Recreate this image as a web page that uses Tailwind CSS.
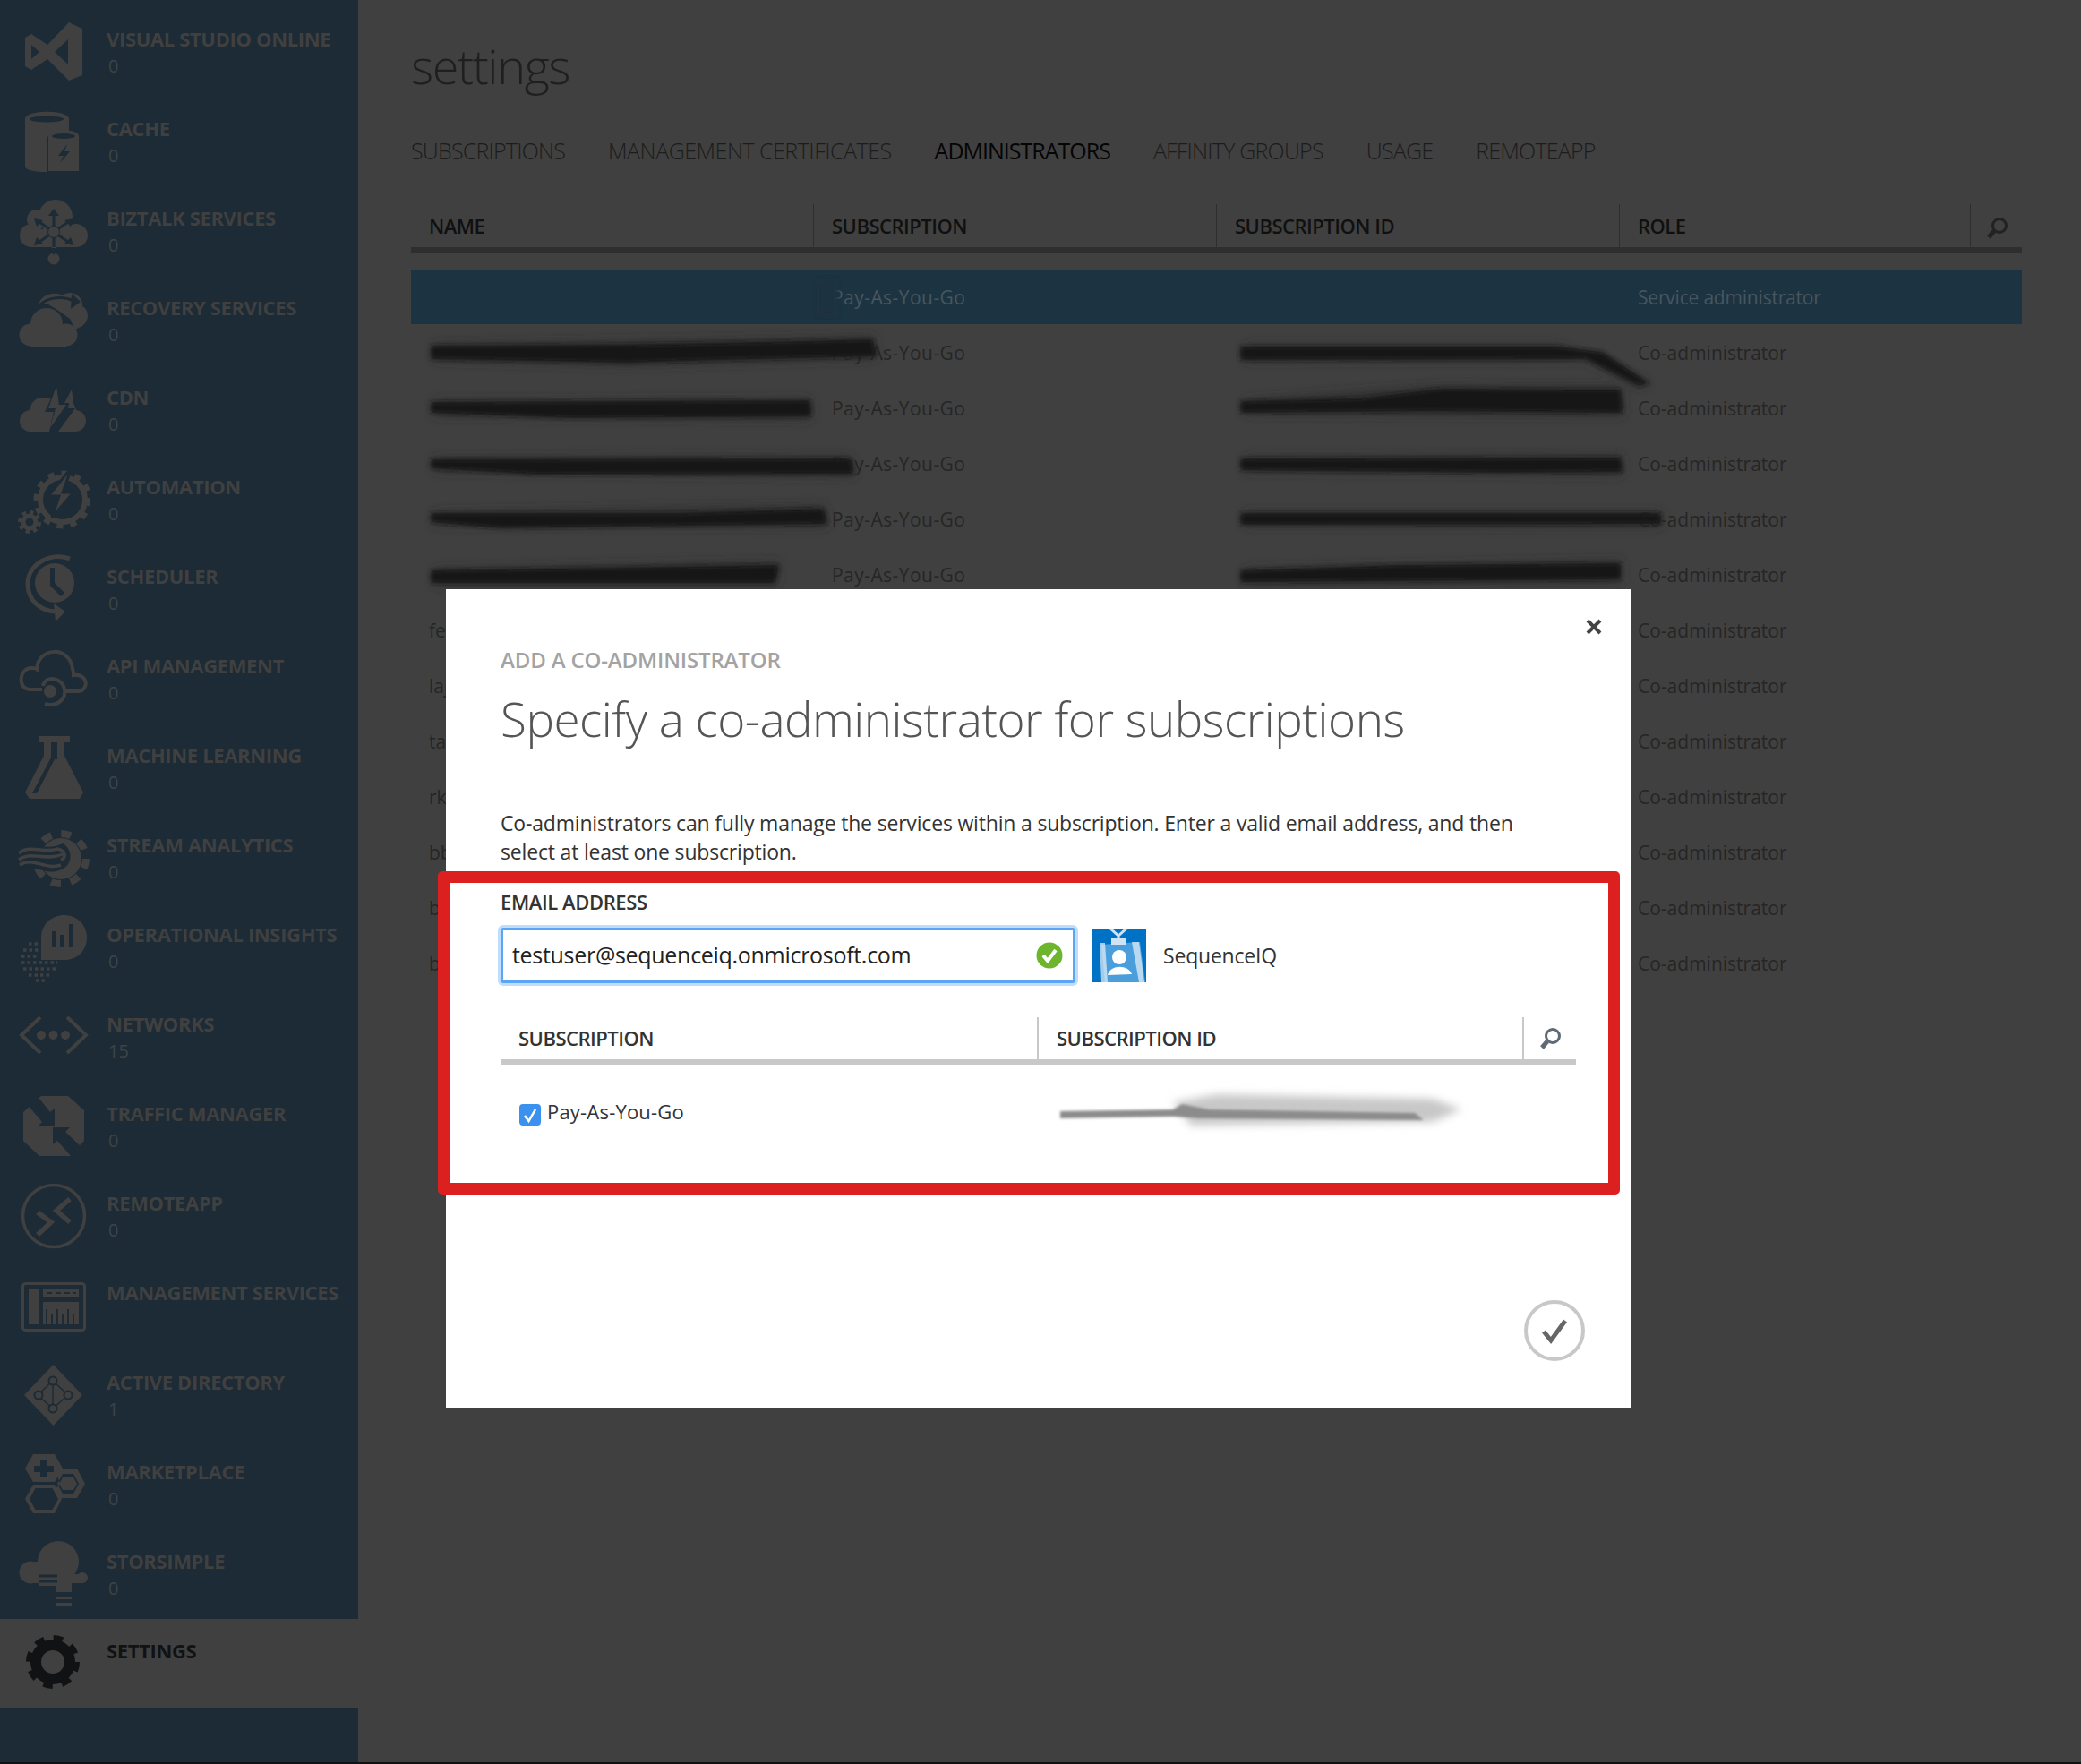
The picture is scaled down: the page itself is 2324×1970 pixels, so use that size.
<!DOCTYPE html>
<html lang="en">
<head>
<meta charset="UTF-8">
<title>settings</title>
<script src="https://cdn.jsdelivr.net/npm/@tailwindcss/browser@4"></script>
</head>
<body class="bg-[#404040] font-['Open_Sans',sans-serif]">
<div class="relative flex w-[2324px] h-[1970px] overflow-hidden border-b-2 border-[#111]">

  <!-- Sidebar -->
  <aside class="w-[400px] shrink-0 pt-2 bg-[#1c2b35] text-[#404040]">
    <div class="flex h-[100px]">
      <svg class="w-20 h-20 mt-2.5 ml-5" viewBox="0 0 80 80" fill="currentColor"><path fill-rule="evenodd" d="M57 7 72 14V66L57 72 33 48 15 60 8 56V24L15 20 33 32ZM56 26 41 40 56 54ZM15 32V48L24 40Z"/></svg>
      <div class="ml-[19px]"><div class="mt-[21px] text-[22px] leading-7 font-bold tracking-[-0.35px]">VISUAL STUDIO ONLINE</div><div class="mt-[3px] text-[20px] leading-7 pl-0.5 text-[#3c444a]">0</div></div>
    </div>
    <div class="flex h-[100px]">
      <svg class="w-20 h-20 mt-2.5 ml-5" viewBox="0 0 80 80" fill="currentColor"><path d="M8 15C8 4 57 4 57 15V30H38L32 36V74C20 74 8 72 8 68Z"/><ellipse cx="32" cy="15" rx="19" ry="3.5" fill="#1c2b35"/><path d="M34 34C34 25 68 25 68 34V73H34Z"/><ellipse cx="51" cy="34" rx="13" ry="3" fill="#1c2b35"/><path d="M55 43 45 56H51L47 64 58 51H52Z" fill="#1c2b35"/></svg>
      <div class="ml-[19px]"><div class="mt-[21px] text-[22px] leading-7 font-bold tracking-[-0.35px]">CACHE</div><div class="mt-[3px] text-[20px] leading-7 pl-0.5 text-[#3c444a]">0</div></div>
    </div>
    <div class="flex h-[100px]">
      <svg class="w-20 h-20 mt-2.5 ml-5" viewBox="0 0 80 80" fill="currentColor"><circle cx="15" cy="45" r="13"/><circle cx="21" cy="27" r="11"/><circle cx="42" cy="24" r="19"/><circle cx="65" cy="45" r="13"/><rect x="15" y="38" width="50" height="20"/><rect x="38" y="56" width="4" height="12"/><circle cx="40" cy="71" r="6.5"/><g fill="#1c2b35"><circle cx="40" cy="41" r="7"/><path d="M40 15 46 23H34ZM40 67 34 59H46Z"/><path d="M18 26 28 28 21 35ZM62 26 59 35 52 28ZM18 56 21 47 28 54ZM62 56 52 54 59 47Z"/></g><g stroke="#1c2b35" stroke-width="3"><path d="M40 22V58M24 30 56 52M56 30 24 52"/></g><circle cx="40" cy="41" r="6"/></svg>
      <div class="ml-[19px]"><div class="mt-[21px] text-[22px] leading-7 font-bold tracking-[-0.35px]">BIZTALK SERVICES</div><div class="mt-[3px] text-[20px] leading-7 pl-0.5 text-[#3c444a]">0</div></div>
    </div>
    <div class="flex h-[100px]">
      <svg class="w-20 h-20 mt-2.5 ml-5" viewBox="0 0 80 80" fill="currentColor"><path d="M23 22C26 10 42 7 50 12 60 4 74 14 72 24 80 28 80 40 72 46L64 50 58 38 44 28 34 22Z"/><path d="M25 22C34 14 50 12 62 18" fill="none" stroke="#1c2b35" stroke-width="3"/><path d="M60 10 70 19 59 27Z" fill="#1c2b35"/><circle cx="14" cy="56" r="12.5"/><circle cx="32" cy="44" r="18"/><circle cx="54" cy="56" r="12.5"/><rect x="14" y="50" width="40" height="19"/></svg>
      <div class="ml-[19px]"><div class="mt-[21px] text-[22px] leading-7 font-bold tracking-[-0.35px]">RECOVERY SERVICES</div><div class="mt-[3px] text-[20px] leading-7 pl-0.5 text-[#3c444a]">0</div></div>
    </div>
    <div class="flex h-[100px]">
      <svg class="w-20 h-20 mt-2.5 ml-5" viewBox="0 0 80 80" fill="currentColor"><circle cx="14" cy="52" r="12"/><circle cx="27" cy="39" r="13"/><circle cx="64" cy="52" r="12"/><path d="M14 45H64V64H14ZM27 26 40 28 42 34 38 50H30ZM60 27 66 42H54L46 48Z"/><path d="M44 12 30 42H40L35 64H45L64 38H56L60 16 44 46 42 42Z" fill="#1c2b35"/><path d="M43 13 34 38H42L36 60 54 34H46Z"/><path d="M60 17 52 32 62 32Z"/></svg>
      <div class="ml-[19px]"><div class="mt-[21px] text-[22px] leading-7 font-bold tracking-[-0.35px]">CDN</div><div class="mt-[3px] text-[20px] leading-7 pl-0.5 text-[#3c444a]">0</div></div>
    </div>
    <div class="flex h-[100px]">
      <svg class="w-20 h-20 mt-2.5 ml-5" viewBox="0 0 80 80" fill="currentColor"><circle cx="50" cy="40" r="25" fill="none" stroke="currentColor" stroke-width="6"/><circle cx="50" cy="40" r="29" fill="none" stroke="currentColor" stroke-width="7" stroke-dasharray="7 8"/><path d="M60 4 34 36H46L38 60 62 32H50L60 4Z" stroke="#1c2b35" stroke-width="3"/><circle cx="13" cy="65" r="7" fill="none" stroke="currentColor" stroke-width="5"/><circle cx="13" cy="65" r="11" fill="none" stroke="currentColor" stroke-width="4" stroke-dasharray="4.5 4.1"/></svg>
      <div class="ml-[19px]"><div class="mt-[21px] text-[22px] leading-7 font-bold tracking-[-0.35px]">AUTOMATION</div><div class="mt-[3px] text-[20px] leading-7 pl-0.5 text-[#3c444a]">0</div></div>
    </div>
    <div class="flex h-[100px]">
      <svg class="w-20 h-20 mt-2.5 ml-5" viewBox="0 0 80 80" fill="currentColor"><circle cx="41" cy="33" r="22"/><path d="M36 16H41V33L52 44 48 48 36 36Z" fill="#1c2b35"/><path d="M58 6C36-2 10 12 11 36 12 52 24 64 42 65" fill="none" stroke="currentColor" stroke-width="5"/><path d="M40 56 53 65 42 76Z"/></svg>
      <div class="ml-[19px]"><div class="mt-[21px] text-[22px] leading-7 font-bold tracking-[-0.35px]">SCHEDULER</div><div class="mt-[3px] text-[20px] leading-7 pl-0.5 text-[#3c444a]">0</div></div>
    </div>
    <div class="flex h-[100px]">
      <svg class="w-20 h-20 mt-2.5 ml-5" viewBox="0 0 80 80" fill="none" stroke="currentColor" stroke-width="4"><path d="M27 52H14C-1 52 1 28 15 28 17 28 20 28 21 29 23 4 58 3 61 29 62 31 62 34 62 36 78 34 80 52 68 54H53"/><path d="M28 48C30 36 50 38 52 52 54 64 42 72 30 68"/><circle cx="36" cy="54" r="7" fill="currentColor" stroke="none"/></svg>
      <div class="ml-[19px]"><div class="mt-[21px] text-[22px] leading-7 font-bold tracking-[-0.35px]">API MANAGEMENT</div><div class="mt-[3px] text-[20px] leading-7 pl-0.5 text-[#3c444a]">0</div></div>
    </div>
    <div class="flex h-[100px]">
      <svg class="w-20 h-20 mt-2.5 ml-5" viewBox="0 0 80 80" fill="currentColor"><path fill-rule="evenodd" d="M24 4H58V11H52V26L73 67 69 74H13L8 67 29 26V11H24ZM37 11V28L16 68H21L41 30H44V11Z"/></svg>
      <div class="ml-[19px]"><div class="mt-[21px] text-[22px] leading-7 font-bold tracking-[-0.35px]">MACHINE LEARNING</div><div class="mt-[3px] text-[20px] leading-7 pl-0.5 text-[#3c444a]">0</div></div>
    </div>
    <div class="flex h-[100px]">
      <svg class="w-20 h-20 mt-2.5 ml-5" viewBox="0 0 80 80" fill="currentColor"><circle cx="48" cy="41" r="23"/><circle cx="48" cy="41" r="28" fill="none" stroke="currentColor" stroke-width="8" stroke-dasharray="11 11"/><path d="M0 28C16 20 30 34 50 24 62 30 62 50 46 54 30 60 16 46 0 50Z" fill="#1c2b35"/><path d="M1 35C14 24 30 36 44 30 54 32 54 40 48 42M1 42C14 32 30 44 50 36M2 48C16 38 30 54 48 48" fill="none" stroke="currentColor" stroke-width="3.5"/></svg>
      <div class="ml-[19px]"><div class="mt-[21px] text-[22px] leading-7 font-bold tracking-[-0.35px]">STREAM ANALYTICS</div><div class="mt-[3px] text-[20px] leading-7 pl-0.5 text-[#3c444a]">0</div></div>
    </div>
    <div class="flex h-[100px]">
      <svg class="w-20 h-20 mt-2.5 ml-5" viewBox="0 0 80 80" fill="currentColor"><path d="M26 29C26 14 38 4 52 4 66 4 77 15 77 29 77 44 66 54 52 54H26Z"/><path d="M38 22H43V40H38ZM47 26H52V40H47ZM57 14H62V40H57Z" fill="#1c2b35"/><g fill="none" stroke="currentColor" stroke-width="3.500" stroke-dasharray="3.500 3"><path d="M12 36H24M6 43H24M4 50H24M4 57H44M6 64H44M12 71H38M20 77H32"/></g></svg>
      <div class="ml-[19px]"><div class="mt-[21px] text-[22px] leading-7 font-bold tracking-[-0.35px]">OPERATIONAL INSIGHTS</div><div class="mt-[3px] text-[20px] leading-7 pl-0.5 text-[#3c444a]">0</div></div>
    </div>
    <div class="flex h-[100px]">
      <svg class="w-20 h-20 mt-2.5 ml-5" viewBox="0 0 80 80" fill="none" stroke="currentColor" stroke-width="4"><path d="M25 18 4 38 25 58M55 18 76 38 55 58"/><g fill="currentColor" stroke="none"><circle cx="26" cy="38" r="5"/><circle cx="39.500" cy="38" r="5"/><circle cx="53" cy="38" r="5"/></g></svg>
      <div class="ml-[19px]"><div class="mt-[21px] text-[22px] leading-7 font-bold tracking-[-0.35px]">NETWORKS</div><div class="mt-[3px] text-[20px] leading-7 pl-0.5 text-[#3c444a]">15</div></div>
    </div>
    <div class="flex h-[100px]">
      <svg class="w-20 h-20 mt-2.5 ml-5" viewBox="0 0 80 80" fill="currentColor"><path d="M26 6H56L74 22V56L58 73H24L6 56V24Z"/><path d="M20 4 36 24 41 20V40H22L27 35 10 15ZM60 74 44 56 39 60V41H58L53 46 72 64Z" fill="#1c2b35"/></svg>
      <div class="ml-[19px]"><div class="mt-[21px] text-[22px] leading-7 font-bold tracking-[-0.35px]">TRAFFIC MANAGER</div><div class="mt-[3px] text-[20px] leading-7 pl-0.5 text-[#3c444a]">0</div></div>
    </div>
    <div class="flex h-[100px]">
      <svg class="w-20 h-20 mt-2.5 ml-5" viewBox="0 0 80 80" fill="none" stroke="currentColor"><circle cx="40" cy="40" r="34.500" stroke-width="3.500"/><path d="M22 36 37 47 22 61M58 21 43 34 58 47" stroke-width="5.500"/></svg>
      <div class="ml-[19px]"><div class="mt-[21px] text-[22px] leading-7 font-bold tracking-[-0.35px]">REMOTEAPP</div><div class="mt-[3px] text-[20px] leading-7 pl-0.5 text-[#3c444a]">0</div></div>
    </div>
    <div class="flex h-[100px]">
      <svg class="w-20 h-20 mt-2.5 ml-5" viewBox="0 0 80 80" fill="currentColor"><rect x="5.500" y="15.500" width="69" height="52" rx="3" fill="none" stroke="currentColor" stroke-width="3"/><rect x="12" y="22" width="11" height="39"/><path d="M28 22H68V31H28ZM28 36H68V61H28Z"/><path d="M32 26H38M42 26H48M52 26H58M62 26H65" stroke="#1c2b35" stroke-width="2"/><path d="M32 44V61M38 50V61M44 44V61M50 50V61M56 44V61M62 50V61" stroke="#1c2b35" stroke-width="2"/></svg>
      <div class="ml-[19px]"><div class="mt-[21px] text-[22px] leading-7 font-bold tracking-[-0.35px]">MANAGEMENT SERVICES</div></div>
    </div>
    <div class="flex h-[100px]">
      <svg class="w-20 h-20 mt-2.5 ml-5" viewBox="0 0 80 80" fill="currentColor"><path d="M39.500 6 72 40 39.500 74 7 40Z"/><path d="M39 24V55M39 24 22 40 39 55 56 40Z" fill="none" stroke="#1c2b35" stroke-width="1.500"/><g stroke="#1c2b35" stroke-width="2"><circle cx="39" cy="24" r="4.500"/><circle cx="39" cy="55" r="4.500"/><circle cx="23" cy="40" r="4.500"/><circle cx="56" cy="40" r="4.500"/></g></svg>
      <div class="ml-[19px]"><div class="mt-[21px] text-[22px] leading-7 font-bold tracking-[-0.35px]">ACTIVE DIRECTORY</div><div class="mt-[3px] text-[20px] leading-7 pl-0.5 text-[#3c444a]">1</div></div>
    </div>
    <div class="flex h-[100px]">
      <svg class="w-20 h-20 mt-2.5 ml-5" viewBox="0 0 80 80" fill="currentColor"><path d="M17 6H41L50 22 41 37H17L8 22Z"/><path d="M25 13H33V19H40V26H33V32H25V26H18V19H25Z" fill="#1c2b35"/><path d="M46 22H66L75 39 66 55H46L41 46 47 39 44 30Z M50 28 44 39 50 50H62L68 39 62 28Z" fill-rule="evenodd"/><path d="M50 32H62L66 39 62 46H50L46 39Z"/><path d="M17 40H41L49 56 41 72H17L8 56ZM19.500 44 13 56 19.500 68H38.500L45 56 38.500 44Z" fill-rule="evenodd"/></svg>
      <div class="ml-[19px]"><div class="mt-[21px] text-[22px] leading-7 font-bold tracking-[-0.35px]">MARKETPLACE</div><div class="mt-[3px] text-[20px] leading-7 pl-0.5 text-[#3c444a]">0</div></div>
    </div>
    <div class="flex h-[100px]">
      <svg class="w-20 h-20 mt-2.5 ml-5" viewBox="0 0 80 80" fill="currentColor"><circle cx="14" cy="38" r="12.500"/><circle cx="45" cy="26" r="23"/><circle cx="72" cy="44" r="6"/><path d="M14 26H50V50H14ZM30 40H72V50H30Z"/><rect x="24" y="40" width="20" height="13"/><path d="M24 42H44M24 48H44" stroke="#1c2b35" stroke-width="3"/><path d="M42 50H60V60H42Z"/><path d="M42 65H60V68H42ZM42 72H60V76H42Z"/></svg>
      <div class="ml-[19px]"><div class="mt-[21px] text-[22px] leading-7 font-bold tracking-[-0.35px]">STORSIMPLE</div><div class="mt-[3px] text-[20px] leading-7 pl-0.5 text-[#3c444a]">0</div></div>
    </div>
    <div class="flex h-[100px] bg-[#404040]">
      <svg class="w-20 h-20 mt-2.5 ml-5 text-[#111214]" viewBox="0 0 80 80" fill="none" stroke="currentColor"><circle cx="39" cy="38" r="19" stroke-width="12"/><circle cx="39" cy="38" r="26" stroke-width="8" stroke-dasharray="10.200 10.200"/></svg>
      <div class="ml-[19px]"><div class="mt-[21px] text-[22px] leading-7 font-bold tracking-[-0.35px] text-[#111214]">SETTINGS</div></div>
    </div>
  </aside>

  <!-- Main -->
  <main class="flex-1 pl-[59px] text-[#1f1f1f]">
    <h1 class="mt-[37px] text-[54px] leading-[72px] font-light tracking-[-1.4px]">settings</h1>
    <nav class="mt-[43px] flex gap-[48px] text-[25px] leading-8 font-light tracking-[-0.8px] text-[#1c1c1c]">
      <span>SUBSCRIPTIONS</span><span class="tracking-[-0.5px]">MANAGEMENT CERTIFICATES</span><span class="text-[#050505] font-normal tracking-[-1px]">ADMINISTRATORS</span><span>AFFINITY GROUPS</span><span>USAGE</span><span>REMOTEAPP</span>
    </nav>
    <div class="mt-[44px] flex w-[1799px] h-[54px] border-b-[6px] border-[#2e2e2e] text-[22px] font-semibold tracking-[-0.5px] text-[#101010]">
      <div class="w-[450px] pl-5 pt-[8px] border-r border-[#2e2e2e]">NAME</div>
      <div class="w-[450px] pl-5 pt-[8px] border-r border-[#2e2e2e]">SUBSCRIPTION</div>
      <div class="w-[450px] pl-5 pt-[8px] border-r border-[#2e2e2e]">SUBSCRIPTION ID</div>
      <div class="w-[392px] pl-5 pt-[8px] border-r border-[#2e2e2e]">ROLE</div>
      <div class="flex-1 pl-[17px] pt-[14px]"><svg class="w-[26px] h-[26px] text-[#222]" viewBox="0 0 26 26" fill="none" stroke="currentColor"><circle cx="15" cy="10" r="7.500" stroke-width="3"/><path d="M9 16 3 23" stroke-width="5"/></svg></div>
    </div>
    <div class="mt-[20px] w-[1799px] text-[21px] text-[#262626]">
      <div class="grid grid-cols-[450px_900px_1fr] h-[60px] items-center pt-0.5 bg-[#1c3341] text-[#47565f]"><span class="pl-5"></span><span class="pl-5 tracking-[0.45px]">Pay-As-You-Go</span><span class="pl-5 tracking-[-0.2px]">Service administrator</span></div>
      <div class="grid grid-cols-[450px_900px_1fr] h-[62px] items-center pt-1"><span class="pl-5"></span><span class="pl-5 tracking-[0.45px]">Pay-As-You-Go</span><span class="pl-5">Co-administrator</span></div>
      <div class="grid grid-cols-[450px_900px_1fr] h-[62px] items-center pt-1"><span class="pl-5"></span><span class="pl-5 tracking-[0.45px]">Pay-As-You-Go</span><span class="pl-5">Co-administrator</span></div>
      <div class="grid grid-cols-[450px_900px_1fr] h-[62px] items-center pt-1"><span class="pl-5"></span><span class="pl-5 tracking-[0.45px]">Pay-As-You-Go</span><span class="pl-5">Co-administrator</span></div>
      <div class="grid grid-cols-[450px_900px_1fr] h-[62px] items-center pt-1"><span class="pl-5"></span><span class="pl-5 tracking-[0.45px]">Pay-As-You-Go</span><span class="pl-5">Co-administrator</span></div>
      <div class="grid grid-cols-[450px_900px_1fr] h-[62px] items-center pt-1"><span class="pl-5"></span><span class="pl-5 tracking-[0.45px]">Pay-As-You-Go</span><span class="pl-5">Co-administrator</span></div>
      <div class="grid grid-cols-[450px_900px_1fr] h-[62px] items-center pt-1"><span class="pl-5">fe</span><span></span><span class="pl-5">Co-administrator</span></div>
      <div class="grid grid-cols-[450px_900px_1fr] h-[62px] items-center pt-1"><span class="pl-5">laj</span><span></span><span class="pl-5">Co-administrator</span></div>
      <div class="grid grid-cols-[450px_900px_1fr] h-[62px] items-center pt-1"><span class="pl-5">ta</span><span></span><span class="pl-5">Co-administrator</span></div>
      <div class="grid grid-cols-[450px_900px_1fr] h-[62px] items-center pt-1"><span class="pl-5">rk</span><span></span><span class="pl-5">Co-administrator</span></div>
      <div class="grid grid-cols-[450px_900px_1fr] h-[62px] items-center pt-1"><span class="pl-5">bb</span><span></span><span class="pl-5">Co-administrator</span></div>
      <div class="grid grid-cols-[450px_900px_1fr] h-[62px] items-center pt-1"><span class="pl-5">bb</span><span></span><span class="pl-5">Co-administrator</span></div>
      <div class="grid grid-cols-[450px_900px_1fr] h-[62px] items-center pt-1"><span class="pl-5">bb</span><span></span><span class="pl-5">Co-administrator</span></div>
    </div>
  </main>

  <!-- Redaction scribbles over the table -->
  <svg class="absolute left-0 top-0 w-[2324px] h-[700px] pointer-events-none" viewBox="0 0 2324 700">
    <defs>
      <filter id="b1" x="-10%" y="-80%" width="120%" height="260%"><feGaussianBlur stdDeviation="2.500"/></filter>
      <filter id="b4" x="-10%" y="-100%" width="120%" height="300%"><feGaussianBlur stdDeviation="6"/></filter>
    </defs>
    <rect x="912" y="312" width="24" height="40" fill="#1c3341" filter="url(#b1)"/>
    <g fill="#2a2a2a" filter="url(#b4)" opacity=".8">
      <path d="M485 385 900 378 975 376 979 400 700 408 485 402Z"/>
      <path d="M1390 386 1740 386 1842 428 1830 432 1770 402 1390 403Z"/>
      <path d="M485 448 905 446 906 468 485 464Z"/>
      <path d="M1390 447 1610 431 1810 432 1812 464 1390 462Z"/>
      <path d="M485 512 950 510 954 532 485 526Z"/>
      <path d="M1390 511 1810 509 1812 530 1390 526Z"/>
      <path d="M485 572 920 565 924 588 485 586Z"/>
      <path d="M1390 572 1855 572 1855 588 1390 587Z"/>
      <path d="M485 636 870 628 866 654 485 654Z"/>
      <path d="M1390 636 1810 626 1810 650 1390 652Z"/>
    </g>
    <g fill="#191919" filter="url(#b1)">
      <path d="M481 386 700 385 900 381 975 379 979 398 800 402 700 405 481 401Z"/>
      <path d="M1385 387 1740 387 1790 393 1842 428 1830 431 1770 401 1385 402Z"/>
      <path d="M481 449 905 447 906 465 640 467 481 461Z"/>
      <path d="M1385 448 1520 445 1610 434 1810 435 1812 461 1600 459 1385 461Z"/>
      <path d="M481 513 950 512 954 529 600 530 481 523Z"/>
      <path d="M1385 512 1810 511 1812 527 1680 528 1385 525Z"/>
      <path d="M481 573 760 573 920 568 924 585 560 590 481 583Z"/>
      <path d="M1385 573 1855 573 1855 585 1385 586Z"/>
      <path d="M481 637 750 633 870 631 866 651 481 651Z"/>
      <path d="M1385 637 1560 631 1810 629 1810 647 1385 650Z"/>
    </g>
  </svg>

  <!-- Dialog -->
  <section class="absolute left-[498px] top-[658px] w-[1324px] h-[914px] bg-white px-[61px] text-[#333]">
    <svg class="absolute right-[33px] top-[33px] w-[18px] h-[18px] text-[#444]" viewBox="0 0 18 18" stroke="currentColor" stroke-width="4"><path d="M2 2 16 16M16 2 2 16"/></svg>
    <div class="pt-[63px] text-[24px] leading-8 font-semibold tracking-[-0.15px] text-[#a3a3a3]">ADD A CO-ADMINISTRATOR</div>
    <h2 class="mt-[12px] text-[53px] leading-[76px] font-light tracking-[-0.5px] text-[#555]">Specify a co-administrator for subscriptions</h2>
    <p class="mt-[62px] w-[1160px] text-[23px] leading-[32px] tracking-[-0.18px]">Co-administrators can fully manage the services within a subscription. Enter a valid email address, and then select at least one subscription.</p>
    <div class="mt-[24px] text-[22px] leading-8 font-semibold tracking-[-0.4px]">EMAIL ADDRESS</div>
    <div class="mt-[13px] flex items-center">
      <div class="flex items-center justify-between w-[642px] h-[62px] pl-[10px] pr-[11px] border-[3px] border-[#5aa5f5] rounded-[3px] ring-[3px] ring-[#c0ddfb]">
        <span class="text-[25px] tracking-[-0.3px] text-[#222]">testuser@sequenceiq.onmicrosoft.com</span>
        <svg class="w-[30px] h-[30px]" viewBox="0 0 30 30"><circle cx="15" cy="15" r="14.500" fill="#6cb52d"/><path d="M8 15 13 21 22 9" fill="none" stroke="#fff" stroke-width="4"/></svg>
      </div>
      <svg class="ml-[19px] w-[60px] h-[60px]" viewBox="0 0 60 60"><rect width="60" height="60" fill="#0072c6"/><path d="M20 0 29 8 38 0M29 8V16" fill="none" stroke="#cfe3f4" stroke-width="3"/><path d="M10 18 53 15 59 60 14 60Z" fill="#4a9edb"/><path d="M21 11H38V18H21Z" fill="#cfe3f4"/><path d="M8 16H14L17 60H10ZM44 15H52L58 60H52Z" fill="#e8f2fa" opacity=".7"/><circle cx="30" cy="32" r="8" fill="#fff"/><path d="M17 52C20 40 40 40 44 51Z" fill="#fff"/></svg>
      <span class="ml-[19px] text-[23px] tracking-[-0.2px]">SequenceIQ</span>
    </div>
    <div class="mt-[38px] flex w-[1201px] h-[53px] border-b-[6px] border-[#c8c8c8] text-[22px] font-semibold tracking-[-0.5px]">
      <div class="w-[601px] pl-5 pt-[7px] border-r-2 border-[#c8c8c8]">SUBSCRIPTION</div>
      <div class="w-[542px] pl-5 pt-[7px] border-r-2 border-[#c8c8c8]">SUBSCRIPTION ID</div>
      <div class="flex-1 pl-[17px] pt-[11px]"><svg class="w-[26px] h-[26px] text-[#5f6a75]" viewBox="0 0 26 26" fill="none" stroke="currentColor"><circle cx="15" cy="10" r="7.500" stroke-width="3"/><path d="M9 16 3 23" stroke-width="5"/></svg></div>
    </div>
    <div class="mt-[37px] flex items-start pl-[21px] text-[22px] tracking-[0.2px]">
      <svg class="mt-[7px] w-6 h-6" viewBox="0 0 24 24"><rect width="24" height="24" rx="4" fill="#3b92ee"/><path d="M6 13 10.500 19 18 6" fill="none" stroke="#fff" stroke-width="2.500"/></svg>
      <span class="ml-[7px] leading-[30px]">Pay-As-You-Go</span>
    </div>
    <svg class="absolute left-[672px] top-[545px] w-[480px] h-[70px]" viewBox="0 0 480 70">
      <defs><filter id="b2" x="-10%" y="-80%" width="120%" height="260%"><feGaussianBlur stdDeviation="5"/></filter><filter id="b3" x="-10%" y="-80%" width="120%" height="260%"><feGaussianBlur stdDeviation="1.500"/></filter></defs>
      <path d="M140 28 190 19 430 24 462 36 430 50 160 54Z" fill="#c8c8c8" filter="url(#b2)"/>
      <path d="M14 38 140 36 150 30 180 36 410 40 420 48 170 46 140 44 14 46Z" fill="#8c8c8c" filter="url(#b3)"/>
    </svg>
    <button class="absolute left-[1204px] top-[794px] flex items-center justify-center w-[68px] h-[68px] rounded-full border-[4px] border-[#c8c8c8]">
      <svg class="w-8 h-8" viewBox="0 0 32 32" fill="none" stroke="#666" stroke-width="5"><path d="M4 17 12 27 28 5"/></svg>
    </button>
  </section>

  <!-- Red highlight drawn over the dialog -->
  <div class="absolute left-[489px] top-[973px] w-[1320px] h-[361px] border-[13px] border-[#dc1f1f] rounded-[5px] pointer-events-none"></div>
</div>
</body>
</html>
